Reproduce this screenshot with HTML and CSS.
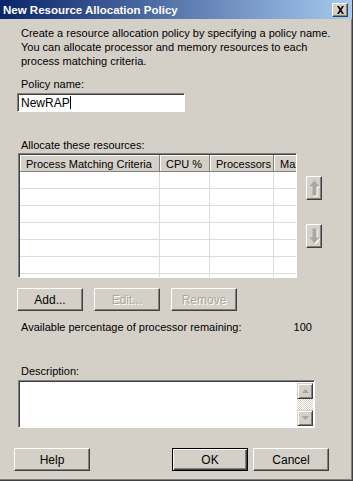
FILE: index.html
```html
<!DOCTYPE html>
<html lang="en">
  <head>
    <meta name="viewport" content="width=device-width" />
    <title>New Resource Allocation Policy</title>
    <link rel="stylesheet" href="styles.css">
  </head>
  <body>
    <div class="window">
      <div class="titlebar">
        <span class="title">New Resource Allocation Policy</span>
        <span class="close-btn">
          <svg width="9" height="8" viewBox="0 0 9 8"><path d="M1 0h2l1.5 2.5L6 0h2L5.5 4 8 8H6L4.5 5.5 3 8H1l2.5-4z" fill="#000"/></svg>
        </span>
      </div>

      <div class="content">
        <p class="intro">Create a resource allocation policy by specifying a policy name.
          You can allocate processor and memory resources to each
          process matching criteria.</p>

        <label class="label">Policy name:</label>
        <div class="textbox">NewRAP<span class="caret"></span></div>

        <label class="label label-alloc">Allocate these resources:</label>
        <div class="alloc-row">
          <div class="listview">
            <div class="grid">
              <div class="hd">Process Matching Criteria</div>
              <div class="hd">CPU %</div>
              <div class="hd">Processors</div>
              <div class="hd">Max</div>
              <div class="cell"></div><div class="cell"></div><div class="cell"></div><div class="cell"></div>
              <div class="cell"></div><div class="cell"></div><div class="cell"></div><div class="cell"></div>
              <div class="cell"></div><div class="cell"></div><div class="cell"></div><div class="cell"></div>
              <div class="cell"></div><div class="cell"></div><div class="cell"></div><div class="cell"></div>
              <div class="cell"></div><div class="cell"></div><div class="cell"></div><div class="cell"></div>
              <div class="cell"></div><div class="cell"></div><div class="cell"></div><div class="cell"></div>
              <div class="cell"></div><div class="cell"></div><div class="cell"></div><div class="cell"></div>
            </div>
          </div>
          <div class="move-btns">
            <span class="move-btn">
              <svg width="11" height="17" viewBox="0 0 11 17"><path d="M6.5 1.5l5 6h-3v9h-4v-9h-3z" fill="#fff"/><path d="M5.5 0.5l5 6h-3v9h-4v-9h-3z" fill="#a9a7a0"/></svg>
            </span>
            <span class="move-btn">
              <svg width="11" height="17" viewBox="0 0 11 17"><path d="M6.5 16.5l5-6h-3v-9h-4v9h-3z" fill="#fff"/><path d="M5.5 15.5l5-6h-3v-9h-4v9h-3z" fill="#a9a7a0"/></svg>
            </span>
          </div>
        </div>

        <div class="btn-row">
          <span class="btn">Add...</span>
          <span class="btn disabled">Edit...</span>
          <span class="btn disabled">Remove</span>
        </div>

        <div class="remaining">
          <span>Available percentage of processor remaining:</span>
          <span class="value">100</span>
        </div>

        <label class="label label-desc">Description:</label>
        <div class="textarea">
          <div class="scrollbar">
            <span class="sb-btn">
              <svg width="7" height="4" viewBox="0 0 7 4"><path d="M3.5 0L7 4H0z" fill="#a9a7a0"/></svg>
            </span>
            <span class="sb-track"></span>
            <span class="sb-btn">
              <svg width="7" height="4" viewBox="0 0 7 4"><path d="M0 0h7L3.5 4z" fill="#a9a7a0"/></svg>
            </span>
          </div>
        </div>

        <div class="footer">
          <span class="btn wide">Help</span>
          <span class="spacer"></span>
          <span class="btn wide default">OK</span>
          <span class="btn wide">Cancel</span>
        </div>
      </div>
    </div>
  </body>
</html>
```

FILE: styles.css
```css
body {
  margin: 0;
  background: #d4d0c8;
  font-family: "Liberation Sans", Arial, sans-serif;
  font-size: 11px;
  color: #000;
}

.window {
  width: 353px;
  height: 481px;
  box-sizing: border-box;
  background: #d4d0c8;
  border-right: 1px solid #404040;
  border-bottom: 1px solid #404040;
  box-shadow: inset -1px -1px 0 #808080;
}

/* title bar */
.titlebar {
  display: flex;
  align-items: center;
  height: 19px;
  padding: 0 4px 0 3px;
  background: linear-gradient(to right, #0a246a, #a6caf0);
}

.title {
  flex-grow: 1;
  color: #fff;
  font-weight: bold;
  font-size: 11.5px;
}

.close-btn {
  display: flex;
  align-items: center;
  justify-content: center;
  width: 14px;
  height: 12px;
  background: #d4d0c8;
  border: 1px solid;
  border-color: #fff #404040 #404040 #fff;
  box-shadow: inset -1px -1px 0 #808080;
}

/* content */
.content {
  padding: 7px 0 0 21px;
}

.intro {
  margin: 0;
  width: 310px;
  line-height: 14px;
}

.label {
  display: block;
  margin-top: 9px;
  line-height: 14px;
}

.label-alloc {
  margin-top: 26px;
}

.label-desc {
  margin-top: 30px;
}

.textbox {
  display: flex;
  align-items: center;
  margin: 2px 0 0 -4px;
  width: 168px;
  height: 19px;
  box-sizing: border-box;
  padding-left: 3px;
  background: #fff;
  border: 1px solid;
  border-color: #808080 #fff #fff #808080;
  box-shadow: inset 1px 1px 0 #404040;
  font-size: 12px;
}

.caret {
  width: 1px;
  height: 13px;
  background: #000;
}

/* list */
.alloc-row {
  display: flex;
  margin: 1px 0 0 -3px;
}

.listview {
  width: 279px;
  height: 125px;
  box-sizing: border-box;
  overflow: hidden;
  background: #fff;
  border: 1px solid;
  border-color: #808080 #fff #fff #808080;
  box-shadow: inset 1px 1px 0 #404040;
  padding: 1px 0 0 1px;
}

.grid {
  display: grid;
  grid-template-columns: 140px 50px 64px 80px;
  grid-auto-rows: 17px;
}

.hd {
  box-sizing: border-box;
  background: #d4d0c8;
  border-right: 1px solid #808080;
  border-bottom: 1px solid #808080;
  box-shadow: inset 1px 1px 0 #fff;
  padding: 2px 0 0 6px;
  white-space: nowrap;
  line-height: 14px;
}

.cell {
  border-right: 1px solid #dedcd6;
  border-bottom: 1px solid #dedcd6;
}

.move-btns {
  display: flex;
  flex-direction: column;
  gap: 24px;
  margin: 23px 0 0 9px;
}

.move-btn {
  display: flex;
  align-items: center;
  justify-content: center;
  width: 16px;
  height: 24px;
  box-sizing: border-box;
  background: #d4d0c8;
  border: 1px solid;
  border-color: #fff #404040 #404040 #fff;
  box-shadow: inset -1px -1px 0 #808080;
}

/* buttons */
.btn-row {
  display: flex;
  gap: 11px;
  margin: 10px 0 0 -4px;
}

.btn {
  display: flex;
  align-items: center;
  justify-content: center;
  width: 66px;
  height: 23px;
  box-sizing: border-box;
  background: #d4d0c8;
  border: 1px solid;
  border-color: #fff #404040 #404040 #fff;
  box-shadow: inset -1px -1px 0 #808080;
  font-size: 12px;
}

.btn.disabled {
  color: #aca899;
  text-shadow: 1px 1px 0 #fff;
}

.btn.wide {
  width: 76px;
}

.btn.default {
  border: 1px solid #000;
  box-shadow: inset 1px 1px 0 #fff, inset -1px -1px 0 #404040, inset -2px -2px 0 #808080;
}

.remaining {
  display: flex;
  margin-top: 9px;
  line-height: 14px;
}

.remaining .value {
  margin-left: 52px;
}

/* description */
.textarea {
  display: flex;
  justify-content: flex-end;
  margin: 2px 0 0 -3px;
  width: 297px;
  height: 48px;
  box-sizing: border-box;
  padding: 2px 1px 1px 0;
  background: #fff;
  border: 1px solid;
  border-color: #808080 #fff #fff #808080;
  box-shadow: inset 1px 1px 0 #404040;
}

.scrollbar {
  display: flex;
  flex-direction: column;
  width: 16px;
}

.sb-btn {
  display: flex;
  align-items: center;
  justify-content: center;
  height: 16px;
  box-sizing: border-box;
  background: #d4d0c8;
  border: 1px solid;
  border-color: #d4d0c8 #404040 #404040 #d4d0c8;
  box-shadow: inset 1px 1px 0 #fff, inset -1px -1px 0 #808080;
}

.sb-track {
  flex-grow: 1;
  background: repeating-conic-gradient(#fff 0 25%, #d4d0c8 0 50%) 0 0 / 2px 2px;
}

/* footer */
.footer {
  display: flex;
  gap: 5px;
  margin: 20px 0 0 -7px;
  width: 315px;
}

.spacer {
  flex-grow: 1;
}
```
